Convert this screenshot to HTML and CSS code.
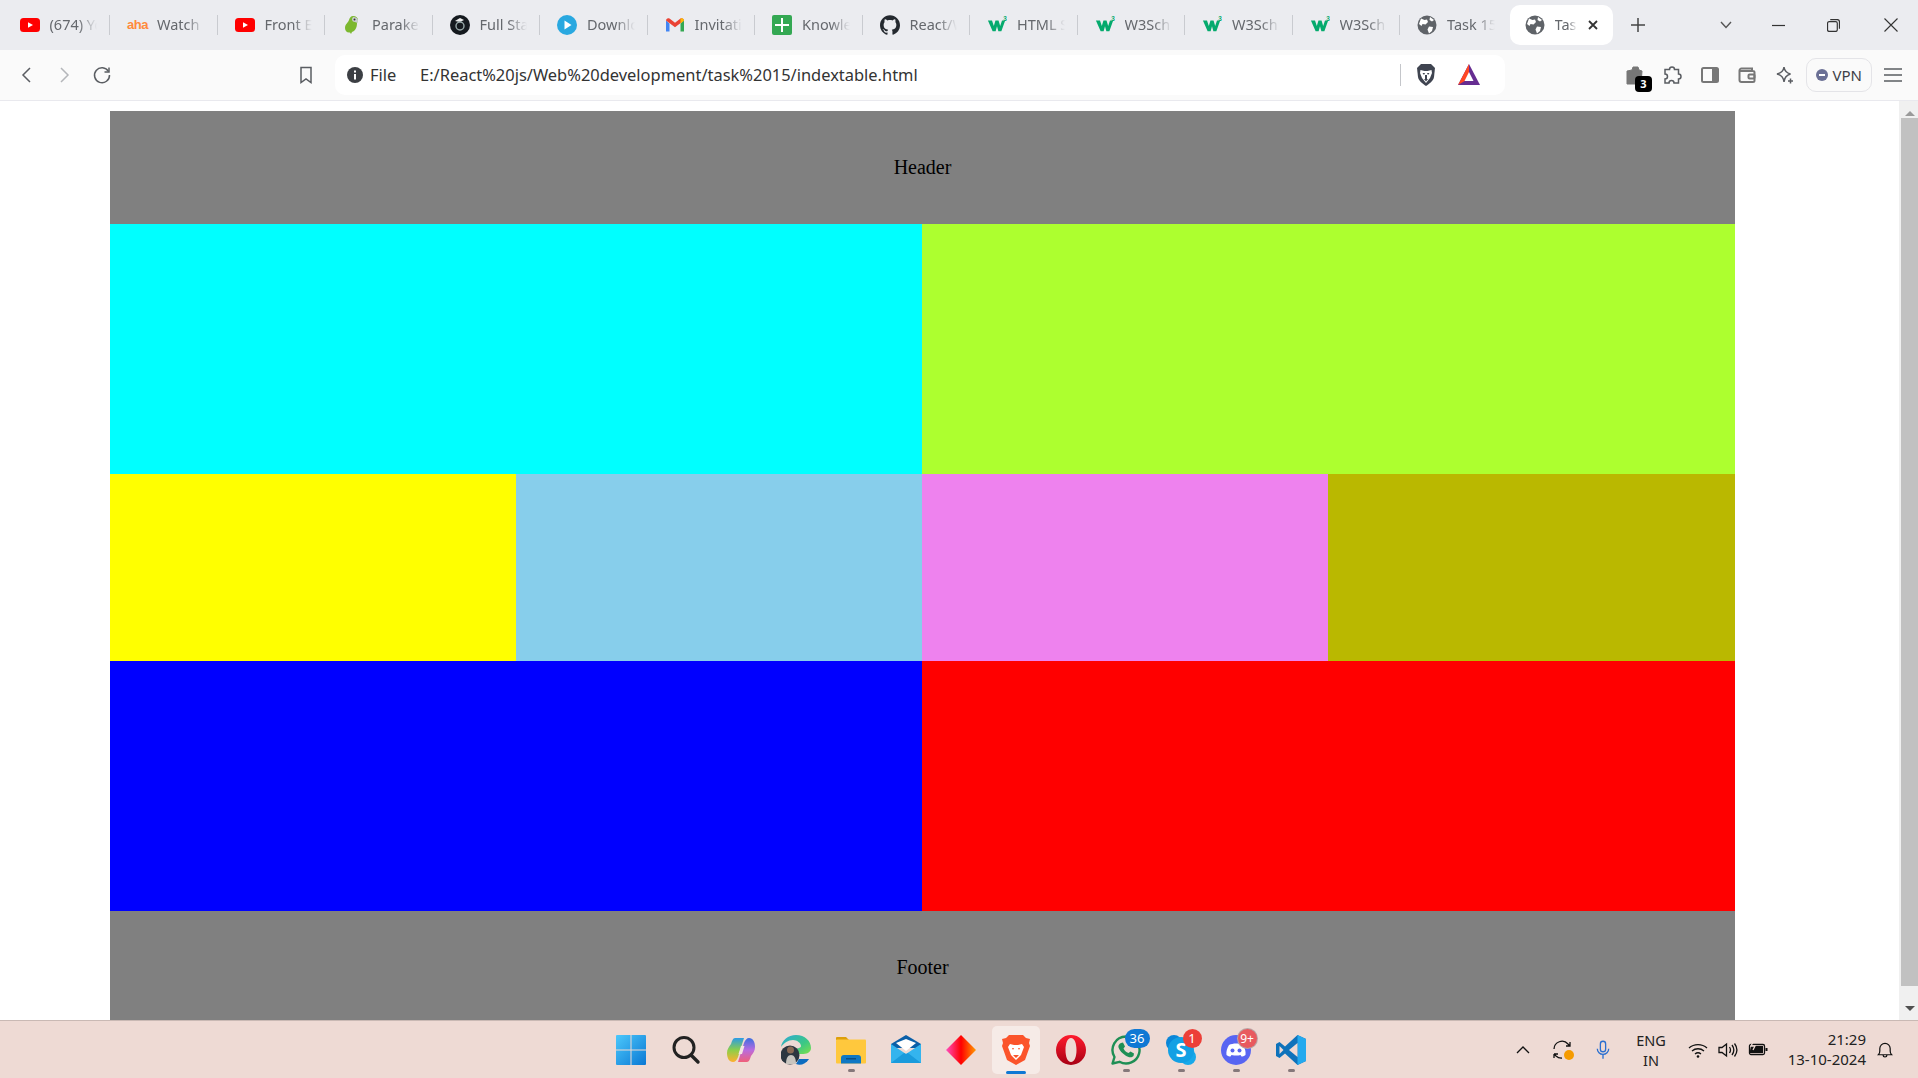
FILE: index.html
```html
<!DOCTYPE html>
<html lang="en">

<head>
    <meta charset="UTF-8">
    <meta name="viewport" content="width=device-width, initial-scale=1.0">
    <title>Task 15</title>
    <link rel="stylesheet" href="styles.css">
</head>

<body>
    <svg class="defs" width="0" height="0">
        <symbol id="yt" viewBox="0 0 20 20">
            <rect y="3" width="20" height="14" rx="3.500" fill="#f00" />
            <path d="M8 7.200l5 2.800-5 2.800z" fill="#fff" />
        </symbol>
        <symbol id="w3" viewBox="0 0 22 20">
            <path d="M1 5h4.500l2 6 1.800-6h3.400l1.800 6 2-6H20l-4.200 12h-3.300L11 11.500 9.500 17H6.200z" fill="#04aa6d" />
            <text x="18" y="6" class="w3-num">3</text>
        </symbol>
        <symbol id="globe" viewBox="0 0 20 20">
            <circle cx="10" cy="10" r="9.500" fill="#5f6368" />
            <path d="M4 3.500l3.500 1.500 2.500-.5 1 2.500-2.500 2.500-3-.5-1 2-2.500-2zM12 11.500l4 .5-1 4-3 2.500-1.500-4zM13 2l4 3-2 1.500-2.500-1.500z" fill="#fff" />
        </symbol>
    </svg>

    <div class="tabstrip">
        <div class="tab"><svg class="fav"><use href="#yt" /></svg><span class="tab-title">(674) Yo</span></div>
        <div class="tab"><span class="fav aha">aha</span><span class="tab-title">Watch</span></div>
        <div class="tab"><svg class="fav"><use href="#yt" /></svg><span class="tab-title">Front E</span></div>
        <div class="tab">
            <svg class="fav" viewBox="0 0 20 20">
                <path d="M11 1c3 0 5 2 5 4l-1 3c0 5-2 8-5 9l-1 2-1-1.500C5 18 3 16 3 13c0-4 3-5 4-8 .5-2 2-4 4-4z" fill="#7cb82f" />
                <path d="M11 2c3 0 5 1.500 5 3.500l-.5 2.500-2.500-1c-2 0-3-1-3-3z" fill="#c9ced0" />
                <circle cx="12.500" cy="4.500" r="1" fill="#333" />
            </svg>
            <span class="tab-title">Parakee</span>
        </div>
        <div class="tab">
            <svg class="fav" viewBox="0 0 20 20">
                <circle cx="10" cy="10" r="10" fill="#151a1f" />
                <path d="M5 6l5-3 4 2-4 2z" fill="#eee" />
                <circle cx="10" cy="11" r="4" fill="none" stroke="#9aa" stroke-width="1.400" />
            </svg>
            <span class="tab-title">Full Sta</span>
        </div>
        <div class="tab">
            <svg class="fav" viewBox="0 0 20 20">
                <circle cx="10" cy="10" r="10" fill="#29a8e0" />
                <path d="M7.500 5.500l7 4.500-7 4.500z" fill="#fff" />
            </svg>
            <span class="tab-title">Downlo</span>
        </div>
        <div class="tab">
            <svg class="fav" viewBox="0 0 20 20">
                <path d="M1 5.500v11h3.500V8.500z" fill="#4285f4" />
                <path d="M15.500 8.500v8H19v-11z" fill="#34a853" />
                <path d="M1 5.500C1 3.500 3 2.500 4.500 3.600L10 7.700l5.500-4.100C17 2.500 19 3.500 19 5.500l-9 6.700z" fill="#ea4335" />
                <path d="M15.500 3.600C17 2.500 19 3.500 19 5.500l-3.500 3z" fill="#fbbc04" />
            </svg>
            <span class="tab-title">Invitati</span>
        </div>
        <div class="tab">
            <svg class="fav" viewBox="0 0 20 20">
                <rect width="20" height="20" rx="2" fill="#34a853" />
                <path d="M9 3h2v6h6v2h-6v6H9v-6H3V9h6z" fill="#fff" />
            </svg>
            <span class="tab-title">Knowle</span>
        </div>
        <div class="tab">
            <svg class="fav" viewBox="0 0 24 24">
                <path d="M12 .297c-6.630 0-12 5.373-12 12 0 5.303 3.438 9.800 8.205 11.385.600.113.820-.258.820-.577 0-.285-.010-1.040-.015-2.040-3.338.724-4.042-1.610-4.042-1.610C4.422 18.070 3.633 17.700 3.633 17.700c-1.087-.744.084-.729.084-.729 1.205.084 1.838 1.236 1.838 1.236 1.070 1.835 2.809 1.305 3.495.998.108-.776.417-1.305.760-1.605-2.665-.300-5.466-1.332-5.466-5.930 0-1.310.465-2.380 1.235-3.220-.135-.303-.540-1.523.105-3.176 0 0 1.005-.322 3.300 1.230.960-.267 1.980-.399 3-.405 1.020.006 2.040.138 3 .405 2.280-1.552 3.285-1.230 3.285-1.230.645 1.653.240 2.873.120 3.176.765.840 1.230 1.910 1.230 3.220 0 4.610-2.805 5.625-5.475 5.920.420.360.810 1.096.810 2.220 0 1.606-.015 2.896-.015 3.286 0 .315.210.690.825.570C20.565 22.092 24 17.592 24 12.297c0-6.627-5.373-12-12-12" fill="#24292f" />
            </svg>
            <span class="tab-title">React/W</span>
        </div>
        <div class="tab"><svg class="fav"><use href="#w3" /></svg><span class="tab-title">HTML S</span></div>
        <div class="tab"><svg class="fav"><use href="#w3" /></svg><span class="tab-title">W3Sch</span></div>
        <div class="tab"><svg class="fav"><use href="#w3" /></svg><span class="tab-title">W3Sch</span></div>
        <div class="tab"><svg class="fav"><use href="#w3" /></svg><span class="tab-title">W3Sch</span></div>
        <div class="tab no-sep"><svg class="fav"><use href="#globe" /></svg><span class="tab-title">Task 15</span></div>
        <div class="tab tab-active">
            <svg class="fav"><use href="#globe" /></svg>
            <span class="tab-title">Tas</span>
            <svg class="tab-close" viewBox="0 0 12 12"><path d="M2 2l8 8M10 2l-8 8" /></svg>
        </div>
        <div class="new-tab"><svg viewBox="0 0 14 14"><path d="M7 0v14M0 7h14" /></svg></div>
        <div class="win-ctrls">
            <div class="ctrl ctrl-list"><svg viewBox="0 0 12 8"><path d="M1 1l5 5.500L11 1" /></svg></div>
            <div class="ctrl ctrl-min"><svg viewBox="0 0 12 12"><path d="M0 6h12" /></svg></div>
            <div class="ctrl ctrl-max"><svg viewBox="0 0 12 12"><rect x=".5" y="2.500" width="9" height="9" rx="1.500" /><path d="M3 .5h6.500a2 2 0 0 1 2 2V9" /></svg></div>
            <div class="ctrl ctrl-close"><svg viewBox="0 0 14 14"><path d="M.5.5l13 13M13.500.5l-13 13" /></svg></div>
        </div>
    </div>

    <div class="toolbar">
        <div class="tool"><svg viewBox="0 0 20 20"><path d="M13 3l-7 7 7 7" /></svg></div>
        <div class="tool tool-off"><svg viewBox="0 0 20 20"><path d="M7 3l7 7-7 7" /></svg></div>
        <div class="tool"><svg viewBox="0 0 20 20"><path d="M16.500 6.500A7.500 7.500 0 1 0 17.500 10" /><path d="M17 2.500v4.500h-4.500" /></svg></div>
        <div class="tool tool-mark"><svg viewBox="0 0 20 20"><path d="M5 2.500h10v15l-5-3.500-5 3.500z" /></svg></div>
        <div class="urlbar">
            <svg class="info" viewBox="0 0 16 16">
                <circle cx="8" cy="8" r="8" fill="#3c3f44" />
                <path d="M7 7h2v5.500H7zM7 3.500h2v2H7z" fill="#fff" />
            </svg>
            <span class="url-scheme">File</span>
            <span class="url-text">E:/React%20js/Web%20development/task%2015/indextable.html</span>
            <span class="url-sep"></span>
            <svg class="shield" viewBox="0 0 20 24">
                <path d="M5 1h10l4 4-1 9c-.5 4-5 7-8 9-3-2-7.500-5-8-9L1 5z" fill="#3f4450" />
                <path d="M4.500 7l4 1h3l4-1 .5 3-2 5-4 5-4-5-2-5z" fill="#fff" />
                <path d="M6.500 10h2.500l-1 2zM11 10h2.500l-1.500 2zM8 16h4l-2 2.500zM9 12h2v4H9z" fill="#3f4450" />
            </svg>
            <svg class="bat" viewBox="0 0 24 24">
                <path d="M12 1l11 21H1z" fill="#662d91" />
                <path d="M12 1L1 22l11-6.500z" fill="#ff4724" />
                <path d="M12 9l4.500 9h-9z" fill="#fff" />
            </svg>
        </div>
        <div class="tool-right">
            <div class="tool tool-wallet">
                <svg viewBox="0 0 20 20"><path d="M3 6l5-1 1-3h5l1 3 3 1-1 13H3z" class="bag" /></svg>
                <span class="wallet-count">3</span>
            </div>
            <div class="tool"><svg viewBox="0 0 20 20"><path d="M7.500 4.500a2.500 2.500 0 0 1 5 0h4v4.500a2.500 2.500 0 0 1 0 5v4h-4.500a2.500 2.500 0 0 0-5 0H3v-4a2.500 2.500 0 0 0 0-5V4.500z" /></svg></div>
            <div class="tool tool-thick"><svg viewBox="0 0 20 20"><rect x="2" y="3" width="16" height="14" rx="1.500" /><rect x="12" y="3" width="6" height="14" fill="#777" stroke="none" /></svg></div>
            <div class="tool tool-thick"><svg viewBox="0 0 20 20"><path d="M15 6V3.500H4.500a2 2 0 0 0-2 2V15a2 2 0 0 0 2 2h11.500a1.500 1.500 0 0 0 1.500-1.500v-8A1.500 1.500 0 0 0 16 6H3" /><rect x="11.500" y="9.500" width="6" height="4" rx="1" /></svg></div>
            <div class="tool"><svg viewBox="0 0 20 20"><path d="M9 2c.5 4 2.500 6 6.500 7-4 1-6 3-6.500 8-.5-5-3-7-7-8C6 8 8.500 6 9 2z" /><path d="M15.500 13.500v5M13 16h5" /></svg></div>
            <div class="vpn"><span class="vpn-dot"></span><span>VPN</span></div>
            <div class="tool"><svg viewBox="0 0 20 20"><path d="M1 4h18M1 10h18M1 16h18" /></svg></div>
        </div>
    </div>

    <div class="viewport">
        <div class="page">
            <div class="layout">
                <div class="cell header">Header</div>
                <div class="cell half aqua"></div>
                <div class="cell half lime"></div>
                <div class="cell yellow"></div>
                <div class="cell sky"></div>
                <div class="cell violet"></div>
                <div class="cell olive"></div>
                <div class="cell half blue"></div>
                <div class="cell half red"></div>
                <div class="cell footer">Footer</div>
            </div>
        </div>
        <div class="scrollbar">
            <div class="arrow arrow-up"></div>
            <div class="thumb"></div>
            <div class="arrow arrow-down"></div>
        </div>
    </div>

    <div class="taskbar">
        <div class="apps">
            <div class="app">
                <svg viewBox="0 0 30 30">
                    <defs><linearGradient id="winblue" x1="0" y1="0" x2="1" y2="1"><stop offset="0" stop-color="#4cc8fb" /><stop offset="1" stop-color="#0a78d4" /></linearGradient></defs>
                    <rect x="0" y="0" width="30" height="30" fill="url(#winblue)" rx="1" />
                    <path d="M15 0v30M0 15h30" stroke="#eedad4" stroke-width="1" />
                </svg>
            </div>
            <div class="app">
                <svg viewBox="0 0 30 30"><circle cx="13" cy="12.500" r="10" fill="none" stroke="#222" stroke-width="3" /><path d="M20 20l7 7" stroke="#222" stroke-width="3.400" stroke-linecap="round" /></svg>
            </div>
            <div class="app">
                <svg viewBox="0 0 30 30">
                    <defs>
                        <linearGradient id="copa" x1="0" y1="0" x2="0" y2="1"><stop offset="0" stop-color="#2c9be6" /><stop offset=".5" stop-color="#8ccf4a" /><stop offset="1" stop-color="#ffb02e" /></linearGradient>
                        <linearGradient id="copb" x1="0" y1="0" x2="0" y2="1"><stop offset="0" stop-color="#3a6fe0" /><stop offset=".5" stop-color="#b86be0" /><stop offset="1" stop-color="#f0607a" /></linearGradient>
                    </defs>
                    <path d="M9 3h9L12 22c-1 3-3 5-5 5C3 27 1 23 1 18c0-4 2-6 4-9 1-3 2-6 4-6z" fill="url(#copa)" />
                    <path d="M21 27h-9l6-19c1-3 3-5 5-5 4 0 6 4 6 9 0 4-2 6-4 9-1 3-2 6-4 6z" fill="url(#copb)" />
                    <path d="M15 11h3.500l-2.500 8h-3.500z" fill="#f3e6e2" />
                </svg>
            </div>
            <div class="app">
                <svg viewBox="0 0 30 30">
                    <defs><linearGradient id="edge" x1="0" y1="0" x2="1" y2="1"><stop offset="0" stop-color="#2fa8d8" /><stop offset=".6" stop-color="#3bc884" /><stop offset="1" stop-color="#7ee04a" /></linearGradient></defs>
                    <path d="M15 0c9 0 15 6 15 13 0 5-5 6-9 6H12c2-7 8-5 8-8 0-3-4-6-8-6-5 0-9 3-12 7C1 5 7 0 15 0z" fill="url(#edge)" />
                    <circle cx="9" cy="20" r="9.500" fill="#2c3640" />
                    <path d="M5 29c0-6 2-9 5-9s5 3 5 9z" fill="#c9c5bf" />
                    <circle cx="9.500" cy="15" r="3.500" fill="#8a6a55" />
                    <path d="M18 24h10c-3 5-9 7-13 5z" fill="#0c6cc0" />
                </svg>
            </div>
            <div class="app has-dot">
                <svg viewBox="0 0 30 30">
                    <path d="M0 3a1 1 0 0 1 1-1h9l3 3h-13z" fill="#dd9f0c" />
                    <rect y="4.500" width="30" height="24" rx="1" fill="#ffc83d" />
                    <path d="M5 28.500v-5.500a3 3 0 0 1 3-3h14a3 3 0 0 1 3 3v5.500z" fill="#0f78c4" />
                    <rect x="10" y="23" width="10" height="1.500" fill="#0a4f86" />
                </svg>
            </div>
            <div class="app">
                <svg viewBox="0 0 30 30">
                    <path d="M15 0L0 9v4h30V9z" fill="#0a5fa8" />
                    <path d="M5 8l10-4 10 4-10 8z" fill="#fff" />
                    <path d="M0 9l15 10L30 9v19H0z" fill="#34b4ee" />
                    <path d="M0 28l13-10 2 1 2-1 13 10z" fill="#1a9bdc" />
                </svg>
            </div>
            <div class="app">
                <svg viewBox="0 0 30 30">
                    <defs><linearGradient id="dia" x1="0" y1="0" x2="1" y2="0"><stop offset="0" stop-color="#ff4ec0" /><stop offset=".5" stop-color="#f00" /><stop offset="1" stop-color="#ff9a00" /></linearGradient></defs>
                    <path d="M15 0l15 15-15 15L0 15z" fill="url(#dia)" />
                </svg>
            </div>
            <div class="app app-active">
                <svg viewBox="0 0 30 30">
                    <path d="M8 0h14l3 3 4 1-1 4 1 3-5 14-9 5-9-5L1 11l1-3-1-4 4-1z" fill="#fb542b" />
                    <path d="M9 9l4 1h4l4-1 2 3-3 8-5 5-5-5-3-8z" fill="#fff" />
                    <path d="M11 13h2l-1 2zM17 13h2l-1 2zM12 20h6l-3 3z" fill="#fb542b" />
                </svg>
            </div>
            <div class="app">
                <svg viewBox="0 0 30 30">
                    <defs><linearGradient id="opera" x1="0" y1="0" x2="0" y2="1"><stop offset="0" stop-color="#ff1b2d" /><stop offset="1" stop-color="#a70014" /></linearGradient></defs>
                    <path fill-rule="evenodd" d="M15 0a15 15 0 1 1 0 30 15 15 0 0 1 0-30zM15 3c-3.500 0-5.500 5.500-5.500 12s2 12 5.500 12 5.500-5.500 5.500-12-2-12-5.500-12z" fill="url(#opera)" />
                </svg>
            </div>
            <div class="app has-dot">
                <svg viewBox="0 0 30 30">
                    <path d="M15 1.500a13.500 13.500 0 1 1-6.500 25.300L1.500 28.500l2-6.500A13.500 13.500 0 0 1 15 1.500z" fill="none" stroke="#1f8f55" stroke-width="2.400" stroke-linejoin="round" />
                    <path d="M10 8l2-.5 2 4-1.500 2c1 2 2.500 3.500 5 4.500l2-1.500 3.500 2-.5 2.500c-2 2-5 1.500-8-.5s-6-5-7-8c-.5-2 .5-3.500 2.500-4.500z" fill="#1f8f55" />
                </svg>
                <span class="badge badge-blue">36</span>
            </div>
            <div class="app has-dot">
                <svg viewBox="0 0 30 30">
                    <circle cx="8" cy="8" r="8" fill="#0a86d8" />
                    <circle cx="22" cy="22" r="8" fill="#17a9ea" />
                    <circle cx="15" cy="15" r="13" fill="#12a0e4" />
                    <text x="15" y="22" class="skype-s">S</text>
                </svg>
                <span class="badge badge-red">1</span>
            </div>
            <div class="app has-dot">
                <svg viewBox="0 0 30 30">
                    <circle cx="15" cy="15" r="15" fill="#5865f2" />
                    <path d="M8 10c4-2 10-2 14 0 2 3 3 7 2.500 10-1.500 1-3 1.500-4 1.500l-1-1.500c-3 .8-5 .8-9 0l-1 1.500c-1 0-2.500-.5-4-1.500C5 17 6 13 8 10z" fill="#fff" />
                    <circle cx="11.500" cy="15.500" r="2" fill="#5865f2" />
                    <circle cx="18.500" cy="15.500" r="2" fill="#5865f2" />
                </svg>
                <span class="badge badge-grey">9+</span>
            </div>
            <div class="app has-dot">
                <svg viewBox="0 0 30 30">
                    <path d="M21.500 0L30 4v22l-8.500 4L9 18.500 3.500 23 0 21V9l3.500-2L9 11.500z" fill="#0e72bb" />
                    <path d="M21.500 0L30 4v22l-8.500 4z" fill="#24a9ee" />
                    <path d="M21.500 8L13 15l8.500 7z" fill="#eedad4" />
                    <path d="M3.500 11v8l4-4z" fill="#eedad4" />
                </svg>
            </div>
        </div>

        <div class="tray">
            <svg class="tray-chevron" viewBox="0 0 14 8"><path d="M1 7l6-6 6 6" /></svg>
            <div class="tray-sync">
                <svg viewBox="0 0 20 20"><path d="M1 9a8 8 0 0 1 14-5l2 2M17 2v4h-4" /><path d="M1 14v4M1 14h4M1 14l2 2a8 8 0 0 0 6 2" /></svg>
                <span class="sync-dot"></span>
            </div>
            <svg class="tray-mic" viewBox="0 0 16 22"><rect x="5" y="1" width="6" height="12" rx="3" /><path d="M1.500 9.500a6.500 6.500 0 0 0 13 0M8 16v5" /></svg>
            <div class="lang"><span>ENG</span><span>IN</span></div>
            <svg class="tray-wifi" viewBox="0 0 20 15"><path d="M1 5c5-4.500 13-4.500 18 0M4 8c3.500-3 8.500-3 12 0M7 11c1.800-1.500 4.200-1.500 6 0" /><circle cx="10" cy="13.500" r="1.300" fill="#111" stroke="none" /></svg>
            <svg class="tray-vol" viewBox="0 0 20 16"><path d="M1 5.500h3L8.500 2v12L4 10.500H1zM11.500 5c1.200 1.800 1.200 4.200 0 6M14 3c2.200 3 2.200 7 0 10M16.500 1.500c3 4 3 9 0 13" /></svg>
            <svg class="tray-bat" viewBox="0 0 20 17"><rect x="1.500" y="4.500" width="15" height="10" rx="1.500" /><path d="M3 6h12v7H1.500z" fill="#111" stroke="none" /><path d="M18.500 8v3" stroke-width="2" /><path d="M6 0L3 6h4l-2 4" stroke="#eedad4" /></svg>
            <div class="clock"><span>21:29</span><span>13-10-2024</span></div>
            <svg class="tray-bell" viewBox="0 0 16 18"><path d="M1 13.500c1-1 1.500-2 1.500-4V7a5.500 5.500 0 0 1 11 0v2.500c0 2 .5 3 1.500 4zM6 14c0 2.500 4 2.500 4 0" /></svg>
        </div>
    </div>
</body>

</html>
```

FILE: styles.css
```css
* {
    box-sizing: border-box;
}

html,
body {
    margin: 0;
    height: 100%;
    overflow: hidden;
}

body {
    display: flex;
    flex-direction: column;
    background: #fff;
    font-family: "Noto Sans", "Open Sans", sans-serif;
    color: #222;
}

.defs {
    position: absolute;
}

.w3-num {
    font-size: 7px;
    font-weight: 700;
    fill: #04aa6d;
    font-family: "Liberation Sans", sans-serif;
}

/* tabs */
.tabstrip {
    flex: 0 0 50px;
    display: flex;
    align-items: center;
    padding-left: 2.5px;
    background: #ebecf0;
}

.tab {
    position: relative;
    flex: 0 0 107.5px;
    min-width: 0;
    height: 40px;
    display: flex;
    align-items: center;
    padding-left: 17px;
    font-size: 14.500px;
    color: #65686d;
}

.tab::after {
    content: "";
    position: absolute;
    right: 0;
    top: 10px;
    height: 20px;
    width: 1px;
    background: #c9cbd0;
}

.tab.no-sep::after,
.tab-active::after {
    display: none;
}

.fav {
    flex: 0 0 20px;
    width: 20px;
    height: 20px;
}

.aha {
    font-family: "Liberation Sans", sans-serif;
    font-size: 13px;
    font-weight: 700;
    line-height: 20px;
    color: #ff8a3d;
    letter-spacing: -0.5px;
}

.tab-title {
    margin-left: 10px;
    margin-right: 13px;
    padding-bottom: 2px;
    flex: 1;
    min-width: 0;
    white-space: nowrap;
    overflow: hidden;
    -webkit-mask-image: linear-gradient(to right, #000 60%, transparent 100%);
    mask-image: linear-gradient(to right, #000 60%, transparent 100%);
}

.tab-active {
    flex: 0 0 103.5px;
    margin-left: 2px;
    padding-left: 15px;
    background: #fff;
    border-radius: 10px;
}

.tab-active .tab-title {
    flex: 0 0 22px;
    margin-right: 0;
}

.tab-close {
    width: 12px;
    height: 12px;
    margin-left: 10px;
    fill: none;
    stroke: #333;
    stroke-width: 1.800;
}

.new-tab {
    flex: 0 0 49px;
    height: 40px;
    display: flex;
    align-items: center;
    justify-content: center;
}

.new-tab svg {
    width: 14px;
    height: 14px;
    fill: none;
    stroke: #444;
    stroke-width: 1.500;
}

.win-ctrls {
    margin-left: auto;
    display: flex;
    height: 100%;
}

.ctrl {
    display: flex;
    align-items: center;
    justify-content: center;
}

.ctrl svg {
    fill: none;
    stroke: #333;
    stroke-width: 1.100;
}

.ctrl-list {
    width: 56px;
}

.ctrl-list svg {
    width: 12px;
    height: 8px;
    stroke: #555;
    stroke-width: 1.400;
}

.ctrl-min {
    width: 48px;
}

.ctrl-min svg {
    width: 13px;
    height: 13px;
}

.ctrl-max {
    width: 62px;
}

.ctrl-max svg {
    width: 13px;
    height: 13px;
}

.ctrl-close {
    width: 54px;
}

.ctrl-close svg {
    width: 14px;
    height: 14px;
}

/* toolbar */
.toolbar {
    flex: 0 0 51px;
    display: flex;
    align-items: center;
    padding: 0 6px 1px 8px;
    background: #fafafa;
    border-bottom: 1px solid #e9e9ee;
}

.tool {
    position: relative;
    flex: 0 0 37.5px;
    height: 40px;
    display: flex;
    align-items: center;
    justify-content: center;
}

.tool svg {
    width: 20px;
    height: 20px;
    fill: none;
    stroke: #5a5d62;
    stroke-width: 1.500;
}

.tool-off svg {
    stroke: #b4b6ba;
}

.tool-thick svg {
    stroke: #777;
    stroke-width: 2;
}

.tool-mark {
    margin-left: 167px;
}

.urlbar {
    flex: 0 0 1170px;
    height: 40px;
    margin-left: 10px;
    display: flex;
    align-items: center;
    padding-left: 12px;
    background: #fff;
    border-radius: 10px;
    font-size: 16.450px;
    color: #333;
}

.info {
    width: 16px;
    height: 16px;
}

.url-scheme {
    margin-left: 7px;
    width: 50px;
}

.url-sep {
    width: 1px;
    height: 22px;
    background: #c4c6ca;
    margin-left: auto;
}

.shield {
    width: 20px;
    height: 24px;
    margin-left: 15px;
}

.bat {
    width: 24px;
    height: 24px;
    margin-left: 21px;
    margin-right: 24px;
}

.tool-right {
    margin-left: auto;
    display: flex;
    align-items: center;
}

.tool-wallet svg {
    transform: translateX(-1px);
}

.tool .bag {
    fill: #777;
    stroke: #777;
    stroke-width: 1;
}

.wallet-count {
    position: absolute;
    left: 19px;
    top: 21px;
    width: 17px;
    height: 16px;
    border-radius: 4px;
    background: #000;
    color: #fff;
    font-size: 11px;
    font-weight: 700;
    line-height: 16px;
    text-align: center;
}

.vpn {
    flex: 0 0 66px;
    height: 34px;
    margin: 0 3px 0 2px;
    display: flex;
    align-items: center;
    gap: 5px;
    padding-left: 9px;
    border: 1px solid #e4e4e8;
    border-radius: 10px;
    font-size: 15px;
    color: #3d4047;
}

.vpn-dot {
    position: relative;
    width: 12px;
    height: 12px;
    border-radius: 50%;
    background: #6b7095;
}

.vpn-dot::after {
    content: "";
    position: absolute;
    left: 3px;
    top: 5px;
    width: 6px;
    height: 2px;
    background: #fff;
}

/* page */
.viewport {
    flex: 1;
    min-height: 0;
    display: flex;
}

.page {
    flex: 1;
    padding: 10px 0 0 110px;
    overflow: hidden;
}

.layout {
    display: grid;
    width: 1625px;
    grid-template-columns: 406px 406px 406px 407px;
    grid-template-rows: 113px 250px 187px 250px 113px;
    font-family: "Liberation Serif", serif;
    font-size: 20px;
    color: #000;
}

.cell {
    display: flex;
    align-items: center;
    justify-content: center;
}

.half {
    grid-column: span 2;
}

.header,
.footer {
    grid-column: span 4;
    background: #808080;
}

.aqua {
    background: #00ffff;
}

.lime {
    background: #adff2f;
}

.yellow {
    background: #ffff00;
}

.sky {
    background: #87ceeb;
}

.violet {
    background: #ee82ee;
}

.olive {
    background: #bab800;
}

.blue {
    background: #0000ff;
}

.red {
    background: #ff0000;
}

.scrollbar {
    flex: 0 0 19px;
    display: flex;
    flex-direction: column;
    align-items: flex-end;
    background: #f0f0f0;
}

.arrow {
    flex: 0 0 17px;
    width: 17px;
    display: flex;
    align-items: center;
    justify-content: center;
}

.arrow-up {
    padding-top: 7px;
}

.arrow-down {
    padding-bottom: 7px;
}

.arrow::before {
    content: "";
    border-left: 5px solid transparent;
    border-right: 5px solid transparent;
}

.arrow-up::before {
    border-bottom: 5px solid #9a9a9a;
}

.arrow-down::before {
    border-top: 5px solid #505050;
}

.thumb {
    width: 17px;
    flex: 1;
    margin-bottom: 17px;
    background: #c1c1c1;
}

/* taskbar */
.taskbar {
    position: relative;
    flex: 0 0 58px;
    display: flex;
    align-items: center;
    justify-content: center;
    background: #eedad4;
    border-top: 1px solid #c9b9b4;
}

.apps {
    display: flex;
    margin-left: 4px;
}

.app {
    position: relative;
    flex: 0 0 55px;
    height: 48px;
    display: flex;
    align-items: center;
    justify-content: center;
}

.app svg {
    width: 30px;
    height: 30px;
}

.has-dot::after {
    content: "";
    position: absolute;
    left: 24px;
    bottom: 2px;
    width: 7px;
    height: 3px;
    border-radius: 2px;
    background: #85787a;
}

.app-active::before {
    content: "";
    position: absolute;
    left: 3.500px;
    top: 0;
    width: 48px;
    height: 48px;
    border-radius: 5px;
    background: rgba(255, 255, 255, 0.45);
}

.app-active svg {
    position: relative;
}

.app-active::after {
    content: "";
    position: absolute;
    left: 17.500px;
    bottom: 0;
    width: 20px;
    height: 3px;
    border-radius: 2px;
    background: #0f78d4;
}

.skype-s {
    font-size: 20px;
    font-weight: 700;
    fill: #fff;
    text-anchor: middle;
    font-family: "Noto Sans", sans-serif;
}

.badge {
    position: absolute;
    height: 19px;
    border-radius: 10px;
    font-size: 13px;
    line-height: 19px;
    text-align: center;
    color: #fff;
}

.badge-blue {
    left: 26px;
    top: 3px;
    width: 25px;
    background: #0f78d4;
}

.badge-red {
    left: 29px;
    top: 3px;
    width: 19px;
    background: #ec3f38;
}

.badge-grey {
    left: 29px;
    top: 3px;
    width: 19px;
    background: #e85a5f;
    font-size: 12px;
    box-shadow: 0 0 0 1px #b9a5a5;
}

.tray {
    position: absolute;
    right: 0;
    top: 0;
    bottom: 0;
    width: 405px;
    font-size: 14px;
    color: #222;
}

.tray svg {
    position: absolute;
    fill: none;
    stroke: #111;
    stroke-width: 1.300;
}

.tray-chevron {
    left: 3px;
    top: 25px;
    width: 14px;
    height: 8px;
    stroke-width: 1.600;
}

.tray-sync {
    position: absolute;
    left: 40px;
    top: 19px;
    width: 20px;
    height: 20px;
}

.tray-sync svg {
    left: 0;
    top: 0;
    width: 20px;
    height: 20px;
}

.sync-dot {
    position: absolute;
    right: -1px;
    bottom: 0;
    width: 10px;
    height: 10px;
    border-radius: 50%;
    background: #f59b00;
}

.tray .tray-mic {
    left: 83px;
    top: 19px;
    width: 14px;
    height: 20px;
    stroke: #2a6fd0;
    stroke-width: 1.500;
}

.lang {
    position: absolute;
    left: 122px;
    top: 9px;
    width: 32px;
    display: flex;
    flex-direction: column;
    align-items: center;
    font-size: 14.500px;
    line-height: 20px;
}

.tray-wifi {
    left: 175px;
    top: 22px;
    width: 20px;
    height: 15px;
}

.tray-vol {
    left: 205px;
    top: 21px;
    width: 20px;
    height: 16px;
}

.tray-bat {
    left: 235px;
    top: 19px;
    width: 20px;
    height: 17px;
}

.clock {
    position: absolute;
    right: 52px;
    top: 8px;
    display: flex;
    flex-direction: column;
    align-items: flex-end;
    font-size: 15px;
    line-height: 20px;
}

.tray-bell {
    left: 364px;
    top: 21px;
    width: 16px;
    height: 17px;
}
```
